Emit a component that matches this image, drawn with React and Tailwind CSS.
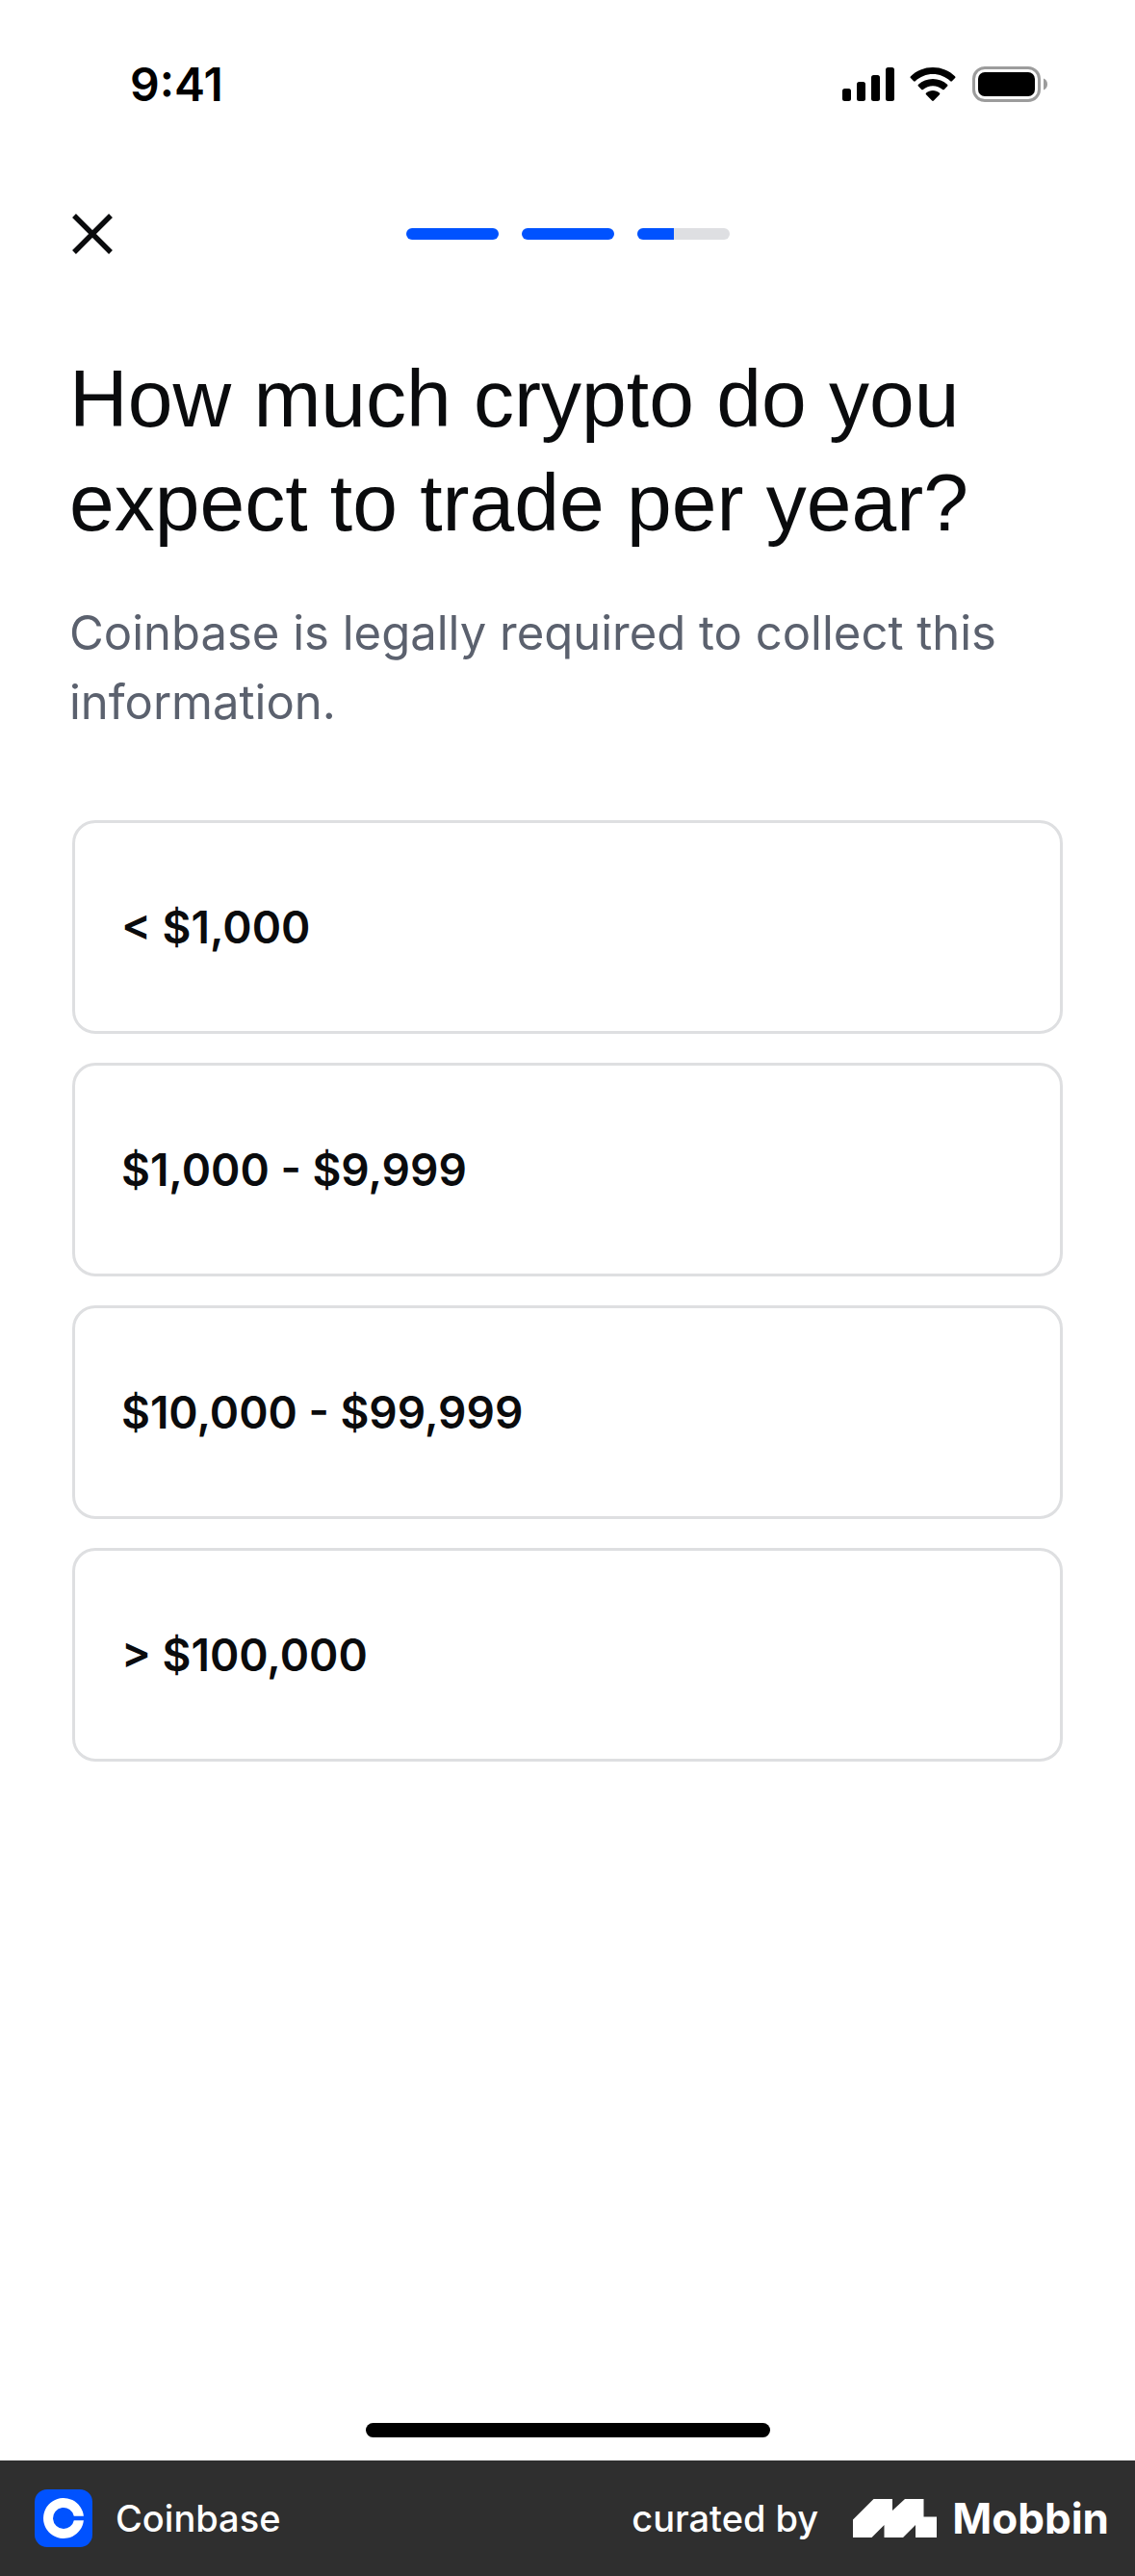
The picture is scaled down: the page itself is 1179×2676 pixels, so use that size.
const options = ['< $1,000', '$1,000 - $9,999', '$10,000 - $99,999', '> $100,000'];

const steps = [
  { id: 1, fill: 100 },
  { id: 2, fill: 100 },
  { id: 3, fill: 40 },
];

function SignalIcon() {
  return (
    <svg className="h-9 w-14" viewBox="0 0 56 36" aria-hidden="true">
      <rect x="2" y="22" width="9" height="13" rx="2.5" />
      <rect x="17" y="15" width="9" height="20" rx="2.5" />
      <rect x="32" y="8" width="9" height="27" rx="2.5" />
      <rect x="47" y="0" width="9" height="35" rx="2.5" />
    </svg>
  );
}

function WifiIcon() {
  return (
    <svg className="h-9 w-12" viewBox="0 0 48 36" aria-hidden="true">
      <path d="M24 0C33 0 41 3.4 47 9.2c.6.6.6 1.3.1 1.8l-3.2 3.3c-.5.5-1.2.5-1.7 0C37.200 9.700 30.900 7.100 24 7.100S10.800 9.700 5.800 14.300c-.5.5-1.200.5-1.700 0L.9 11C.4 10.500.4 9.800 1 9.200 7 3.400 15 0 24 0Z" />
      <path d="M24 12c5.800 0 11 2.200 15 5.800.6.500.6 1.300.1 1.800l-3.300 3.300c-.5.500-1.200.500-1.700.1C31.300 20.600 27.800 19.200 24 19.200s-7.300 1.400-10.100 3.800c-.5.400-1.200.4-1.700-.1l-3.300-3.300c-.5-.5-.5-1.300.1-1.800C13 14.200 18.200 12 24 12Z" />
      <path d="M24 24c2.600 0 5 .9 6.900 2.400.6.5.6 1.200.1 1.800l-6.100 6.300c-.5.600-1.300.6-1.800 0L17 28.200c-.5-.6-.5-1.300.1-1.800C19 24.900 21.400 24 24 24Z" />
    </svg>
  );
}

function BatteryIcon() {
  return (
    <svg className="h-10 w-20" viewBox="0 0 80 40" aria-hidden="true">
      <rect x="2.500" y="2.500" width="68" height="34" rx="11.500" fill="none" stroke="#9c9c9c" strokeWidth="3" />
      <rect x="7" y="7" width="59" height="25" rx="7" />
      <path d="M75 13.500c2.600 1 4 3.200 4 6s-1.400 5-4 6Z" fill="#9c9c9c" />
    </svg>
  );
}

function CloseIcon() {
  return (
    <svg className="size-12" viewBox="0 0 48 48" fill="none" stroke="currentColor" strokeWidth="5.500" aria-hidden="true">
      <path d="M5 5 43 43M43 5 5 43" />
    </svg>
  );
}

function CoinbaseLogo() {
  return (
    <svg className="size-15" viewBox="0 0 60 60" aria-hidden="true">
      <rect width="60" height="60" rx="13" fill="#0052ff" />
      <path
        fill="#fff"
        d="M30 41a11 11 0 1 1 10.800-13.300H50.900A21 21 0 1 0 50.900 32.300H40.800A11 11 0 0 1 30 41Z"
      />
    </svg>
  );
}

function MobbinLogo() {
  return (
    <svg className="h-10 w-[87px]" viewBox="0 0 87 40" fill="#fff" aria-hidden="true">
      <path d="M0 21.500 21.500 0H41V12L54 0H73.500V18.500H87V40H65V27L52 40H32.500V27L19.500 40H0Z" />
    </svg>
  );
}

export default function App() {
  return (
    <div className="flex min-h-screen flex-col bg-white font-['Inter',sans-serif] text-[#0a0b0d]">
      <div className="flex h-44 items-center justify-between pr-[90px] pl-[135px] text-black">
        <span className="text-5xl font-semibold">9:41</span>
        <div className="flex items-center gap-4">
          <SignalIcon />
          <WifiIcon />
          <BatteryIcon />
        </div>
      </div>

      <header className="grid h-[134px] grid-cols-3 items-center px-18">
        <button type="button" aria-label="Close" className="justify-self-start">
          <CloseIcon />
        </button>
        <div className="flex gap-6 justify-self-center">
          {steps.map((step) => (
            <div
              key={step.id}
              role="progressbar"
              aria-label={`Step ${step.id}`}
              aria-valuenow={step.fill}
              className="h-3 w-24 overflow-hidden rounded-full bg-[#dedfe2]"
            >
              <div className="h-full bg-[#0052ff]" style={{ width: `${step.fill}%` }} />
            </div>
          ))}
        </div>
      </header>

      <main className="flex flex-1 flex-col px-18 pt-[50px]">
        <h1 className="font-['Liberation_Sans',sans-serif] text-[84px] leading-[108px]">
          How much crypto do you
          <br />
          expect to trade per year?
        </h1>
        <p className="mt-[46px] text-[49px] leading-[72px] text-[#5b616e]">
          Coinbase is legally required to collect this information.
        </p>
        <div className="mt-[86px] flex flex-col gap-[30px] px-[3px]">
          {options.map((label) => (
            <button
              key={label}
              type="button"
              className="h-[222px] rounded-3xl border-3 border-[#dedfe1] px-12 text-left text-[46px] font-semibold"
            >
              {label}
            </button>
          ))}
        </div>
      </main>

      <div className="flex justify-center pb-6">
        <div className="h-[15px] w-[420px] rounded-full bg-black" />
      </div>

      <footer className="flex h-30 items-center justify-between bg-[#2f2f2f] pr-[27px] pl-9 text-white">
        <div className="flex items-center gap-6">
          <CoinbaseLogo />
          <span className="text-[38px] font-medium">Coinbase</span>
        </div>
        <div className="flex items-center">
          <span className="text-[38px] font-medium">curated by</span>
          <span className="ml-9 flex items-center gap-4">
            <MobbinLogo />
            <span className="text-[44px] font-bold">Mobbin</span>
          </span>
        </div>
      </footer>
    </div>
  );
}
